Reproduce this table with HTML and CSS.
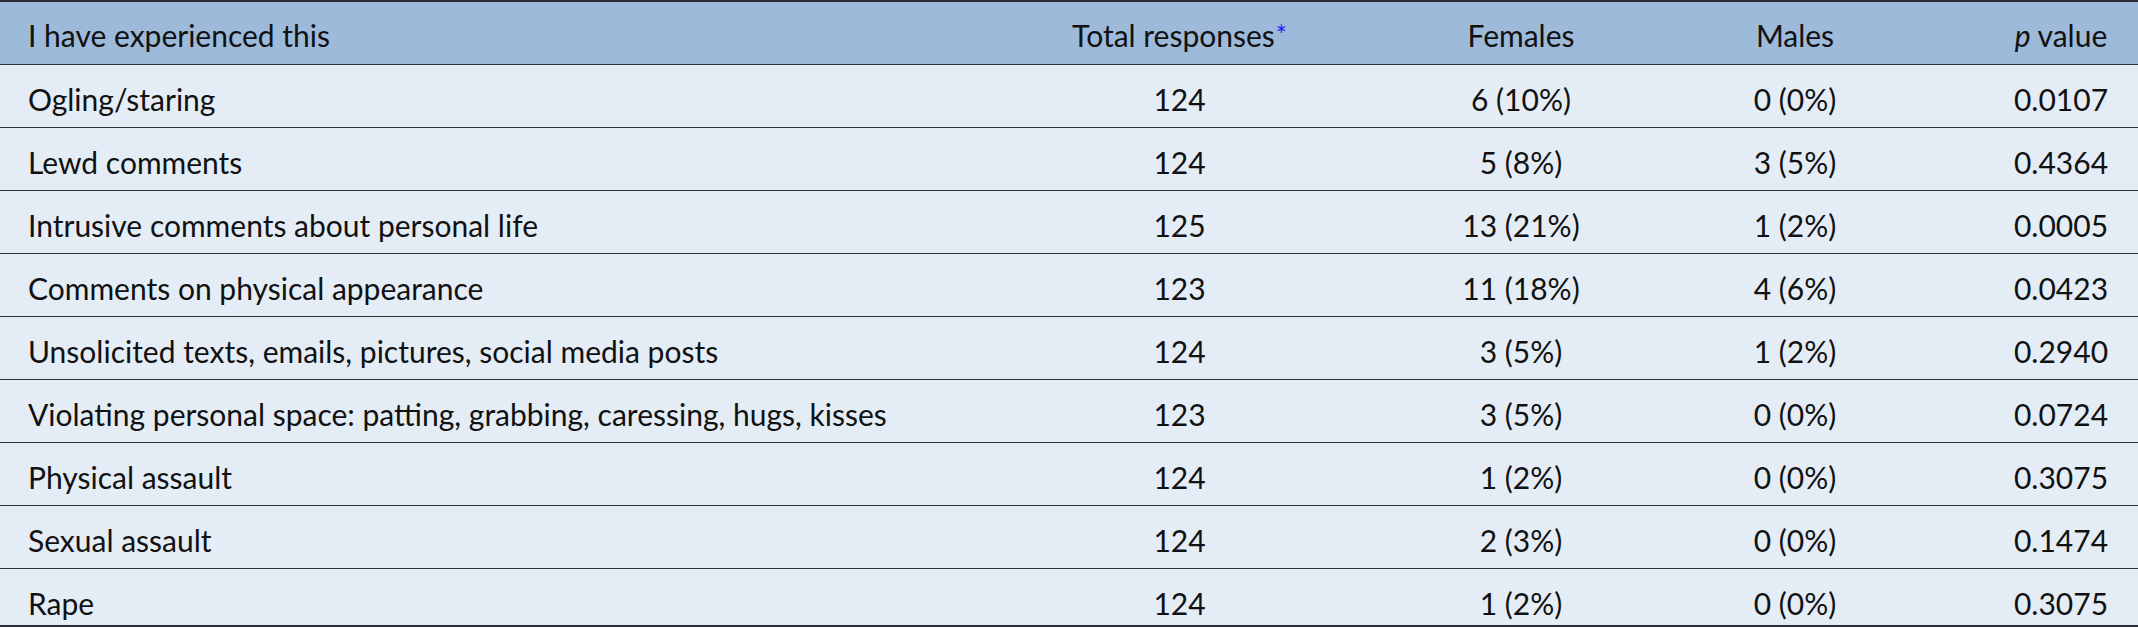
FILE: index.html
```html
<!DOCTYPE html>
<html lang="en">
<head>
<meta charset="utf-8">
<title>Table</title>
<link rel="stylesheet" href="styles.css">
</head>
<body>
<table class="data">
  <colgroup>
    <col class="c-label">
    <col class="c-total">
    <col class="c-fem">
    <col class="c-male">
    <col class="c-p">
  </colgroup>
  <thead>
    <tr>
      <th class="label">I have experienced this</th>
      <th>Total responses<sup class="fn">*</sup></th>
      <th>Females</th>
      <th>Males</th>
      <th><i>p</i> value</th>
    </tr>
  </thead>
  <tbody>
    <tr><td class="label">Ogling/staring</td><td>124</td><td>6 (10%)</td><td>0 (0%)</td><td>0.0107</td></tr>
    <tr><td class="label">Lewd comments</td><td>124</td><td>5 (8%)</td><td>3 (5%)</td><td>0.4364</td></tr>
    <tr><td class="label">Intrusive comments about personal life</td><td>125</td><td>13 (21%)</td><td>1 (2%)</td><td>0.0005</td></tr>
    <tr><td class="label">Comments on physical appearance</td><td>123</td><td>11 (18%)</td><td>4 (6%)</td><td>0.0423</td></tr>
    <tr><td class="label">Unsolicited texts, emails, pictures, social media posts</td><td>124</td><td>3 (5%)</td><td>1 (2%)</td><td>0.2940</td></tr>
    <tr><td class="label">Violating personal space: patting, grabbing, caressing, hugs, kisses</td><td>123</td><td>3 (5%)</td><td>0 (0%)</td><td>0.0724</td></tr>
    <tr><td class="label">Physical assault</td><td>124</td><td>1 (2%)</td><td>0 (0%)</td><td>0.3075</td></tr>
    <tr><td class="label">Sexual assault</td><td>124</td><td>2 (3%)</td><td>0 (0%)</td><td>0.1474</td></tr>
    <tr class="last"><td class="label">Rape</td><td>124</td><td>1 (2%)</td><td>0 (0%)</td><td>0.3075</td></tr>
  </tbody>
</table>
</body>
</html>
```
FILE: styles.css
```css
html, body {
  margin: 0;
  padding: 0;
  background: #ffffff;
}

.data {
  width: 2138px;
  table-layout: fixed;
  border-collapse: collapse;
  font-family: Lato, "Noto Sans", sans-serif;
  font-size: 30px;
  line-height: 36px;
  color: #111111;
  border-top: 2px solid #2b2f33;
  border-bottom: 2px solid #2b2f33;
}

.c-label { width: 923px; }
.c-total { width: 513px; }
.c-fem { width: 170px; }
.c-male { width: 378px; }
.c-p { width: 154px; }

.data th,
.data td {
  text-align: center;
  vertical-align: top;
  padding: 16px 0 10px 0;
  height: 36px;
  font-weight: normal;
  white-space: nowrap;
}

.data th {
  background: #9dbadb;
  padding-top: 15px;
  padding-bottom: 11px;
}

.data td {
  background: #e4ecf6;
}

.data tbody tr {
  border-top: 1px solid #2f3438;
}

.data .label {
  text-align: left;
  padding-left: 28px;
}

.data tr.last td {
  padding-bottom: 4px;
}

.fn {
  color: #1a1aff;
  font-size: 26px;
  line-height: 0;
  vertical-align: 2px;
  margin-left: 1px;
}
```
